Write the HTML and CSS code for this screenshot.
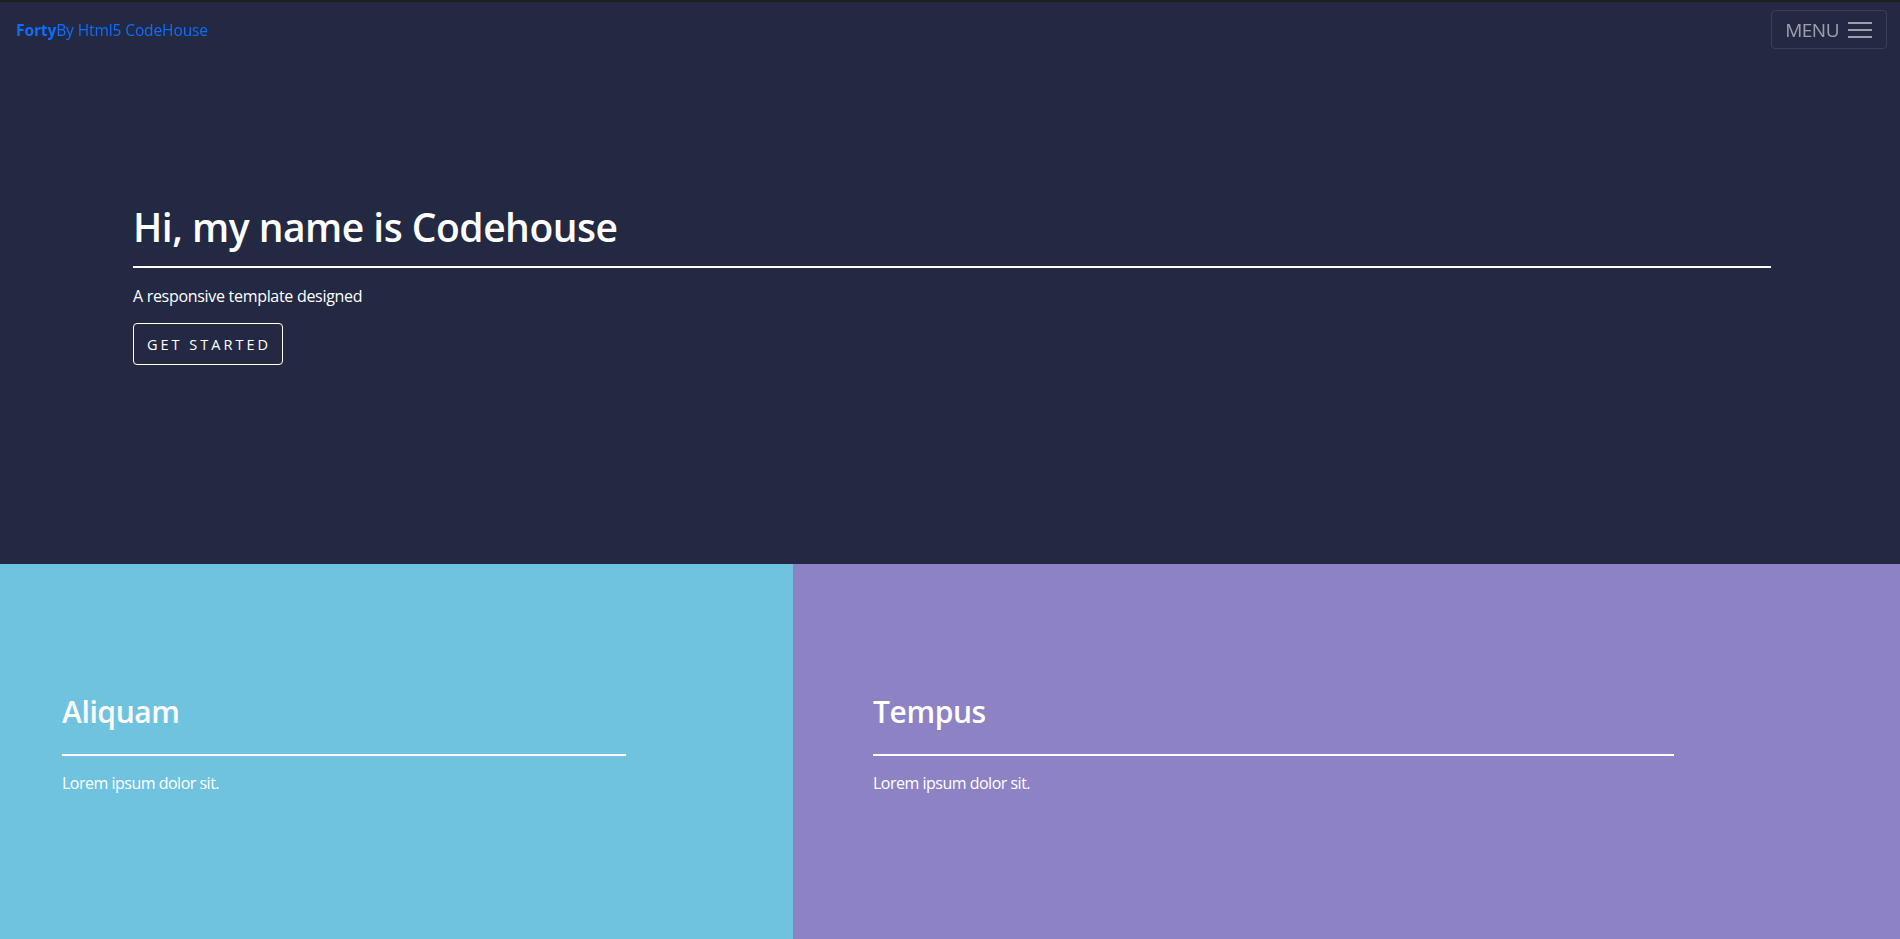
FILE: index.html
```html
<!DOCTYPE html>
<html lang="en">
<head>
<meta charset="utf-8">
<title>Forty By Html5 CodeHouse</title>
<link rel="stylesheet" href="styles.css">
</head>
<body>
<header class="topbar">
  <a class="brand" href="#"><strong>Forty</strong>By Html5 CodeHouse</a>
  <button class="menu-btn" type="button">
    <span class="menu-label">MENU</span>
    <svg class="burger" width="26" height="20" viewBox="0 0 26 20" aria-hidden="true">
      <path d="M1 3h24M1 10h24M1 17h24" stroke="currentColor" stroke-width="2" fill="none"/>
    </svg>
  </button>
</header>
<main>
  <section class="hero">
    <div class="hero-inner">
      <h1 class="hero-title">Hi, my name is Codehouse</h1>
      <hr class="rule">
      <p class="hero-text">A responsive template designed</p>
      <a class="btn-outline" href="#">GET STARTED</a>
    </div>
  </section>
  <section class="tiles">
    <article class="tile tile-blue">
      <div class="tile-inner">
        <h2 class="tile-title">Aliquam</h2>
        <hr class="rule">
        <p class="tile-text">Lorem ipsum dolor sit.</p>
      </div>
    </article>
    <article class="tile tile-purple">
      <div class="tile-inner">
        <h2 class="tile-title">Tempus</h2>
        <hr class="rule">
        <p class="tile-text">Lorem ipsum dolor sit.</p>
      </div>
    </article>
  </section>
</main>
</body>
</html>
```
FILE: styles.css
```css
* { box-sizing: border-box; }
html, body {
  margin: 0;
  padding: 0;
}
body {
  font-family: "Open Sans", "Noto Sans", "DejaVu Sans", sans-serif;
  color: #fff;
  background: #242943;
  border-top: 2px solid #1f1f22;
}
.topbar {
  position: fixed;
  top: 2px;
  left: 0;
  right: 0;
  display: flex;
  align-items: center;
  justify-content: space-between;
  padding: 8px 13px 0 16px;
  z-index: 10;
}
.brand {
  color: #0d6efd;
  text-decoration: none;
  font-size: 15.5px;
  letter-spacing: -0.1px;
}
.brand strong { font-weight: 700; }
.menu-btn {
  display: flex;
  align-items: center;
  gap: 8px;
  height: 39px;
  padding: 0 13px 0 13px;
  background: transparent;
  border: 1px solid rgba(255,255,255,0.1);
  border-radius: 4px;
  color: rgba(255,255,255,0.55);
  font-family: inherit;
  font-size: 19px;
  letter-spacing: -0.5px;
  cursor: pointer;
}
.burger { display: block; }
.hero {
  height: 562px;
  display: flex;
  align-items: flex-start;
  padding: 201px 129px 0 133px;
}
.hero-inner { width: 100%; }
.hero-title {
  margin: 0;
  font-size: 39px;
  font-weight: 600;
  line-height: 48px;
  letter-spacing: -0.5px;
}
.rule {
  margin: 0;
  border: 0;
  height: 2px;
  background: #fff;
}
.hero-title + .rule { margin-top: 15px; }
.hero-text {
  margin: 16px 0 0;
  font-size: 16px;
  line-height: 24px;
  letter-spacing: -0.3px;
}
.btn-outline {
  display: inline-flex;
  align-items: center;
  justify-content: center;
  margin-top: 15px;
  width: 150px;
  height: 42px;
  border: 1px solid #fff;
  border-radius: 4px;
  color: #fff;
  text-decoration: none;
  font-size: 14.5px;
  letter-spacing: 3px;
  padding-left: 2px;
}
.tiles {
  display: grid;
  grid-template-columns: 793px 1fr;
  min-height: 460px;
}
.tile {
  padding-top: 128px;
}
.tile-blue { background: #6fc3df; padding-left: 62px; }
.tile-purple { background: #8d82c4; padding-left: 80px; }
.tile-blue .tile-inner { width: 564px; }
.tile-purple .tile-inner { width: 801px; }
.tile-title {
  margin: 0;
  font-size: 30px;
  font-weight: 600;
  line-height: 40px;
  letter-spacing: -0.4px;
}
.tile-title + .rule { margin-top: 22px; }
.tile-text {
  margin: 15px 0 0;
  font-size: 16px;
  line-height: 24px;
  letter-spacing: -0.5px;
}
```
